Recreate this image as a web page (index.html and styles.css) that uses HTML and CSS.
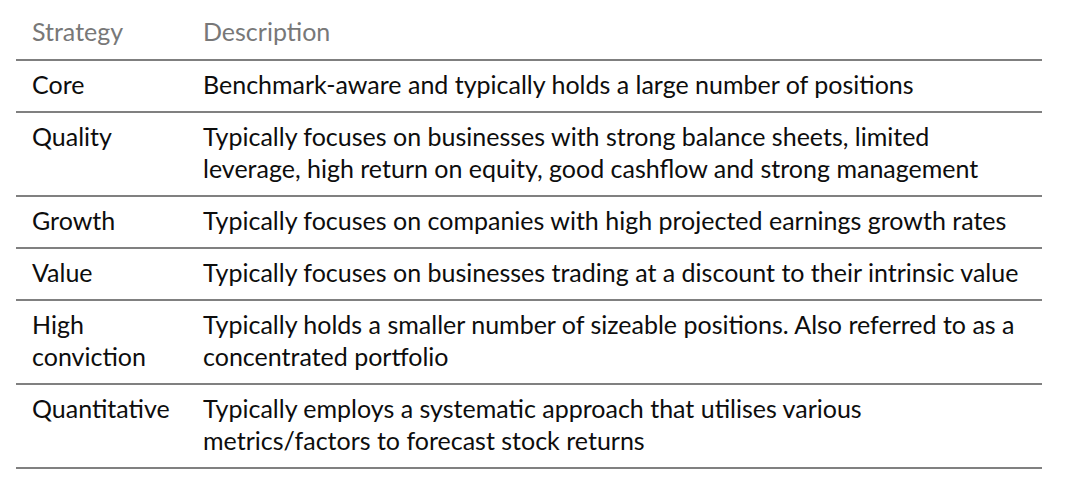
FILE: index.html
```html
<!DOCTYPE html>
<html lang="en">
<head>
<meta charset="utf-8">
<title>Strategies</title>
<link rel="stylesheet" href="styles.css">
</head>
<body>
<table class="strategies">
  <thead>
    <tr>
      <th class="col-name">Strategy</th>
      <th class="col-desc">Description</th>
    </tr>
  </thead>
  <tbody>
    <tr>
      <td class="col-name">Core</td>
      <td class="col-desc">Benchmark-aware and typically holds a large number of positions</td>
    </tr>
    <tr>
      <td class="col-name">Quality</td>
      <td class="col-desc">Typically focuses on businesses with strong balance sheets, limited<br>leverage, high return on equity, good cashflow and strong management</td>
    </tr>
    <tr>
      <td class="col-name">Growth</td>
      <td class="col-desc">Typically focuses on companies with high projected earnings growth rates</td>
    </tr>
    <tr>
      <td class="col-name">Value</td>
      <td class="col-desc">Typically focuses on businesses trading at a discount to their intrinsic value</td>
    </tr>
    <tr>
      <td class="col-name">High<br>conviction</td>
      <td class="col-desc">Typically holds a smaller number of sizeable positions. Also referred to as a<br>concentrated portfolio</td>
    </tr>
    <tr>
      <td class="col-name">Quantitative</td>
      <td class="col-desc">Typically employs a systematic approach that utilises various<br>metrics/factors to forecast stock returns</td>
    </tr>
  </tbody>
</table>
</body>
</html>
```
FILE: styles.css
```css
html, body {
  margin: 0;
  padding: 0;
  background: #ffffff;
}

body {
  font-family: "Lato", "Liberation Sans", sans-serif;
  font-size: 25px;
  color: #0d0d0d;
}

.strategies {
  margin-left: 16px;
  width: 1026px;
  border-collapse: collapse;
  border-spacing: 0;
}

.strategies th,
.strategies td {
  text-align: left;
  vertical-align: top;
  font-weight: 400;
  line-height: 32px;
  padding: 7px 0 11px 0;
  white-space: nowrap;
}

.strategies th {
  color: #787878;
  padding-top: 15px;
  padding-bottom: 12px;
  border-bottom: 2px solid #7f7f7f;
}

.strategies td {
  border-bottom: 2px solid #808080;
}

.col-name {
  width: 171px;
  padding-left: 16px !important;
}

.col-desc {
  padding-left: 0;
}
```
